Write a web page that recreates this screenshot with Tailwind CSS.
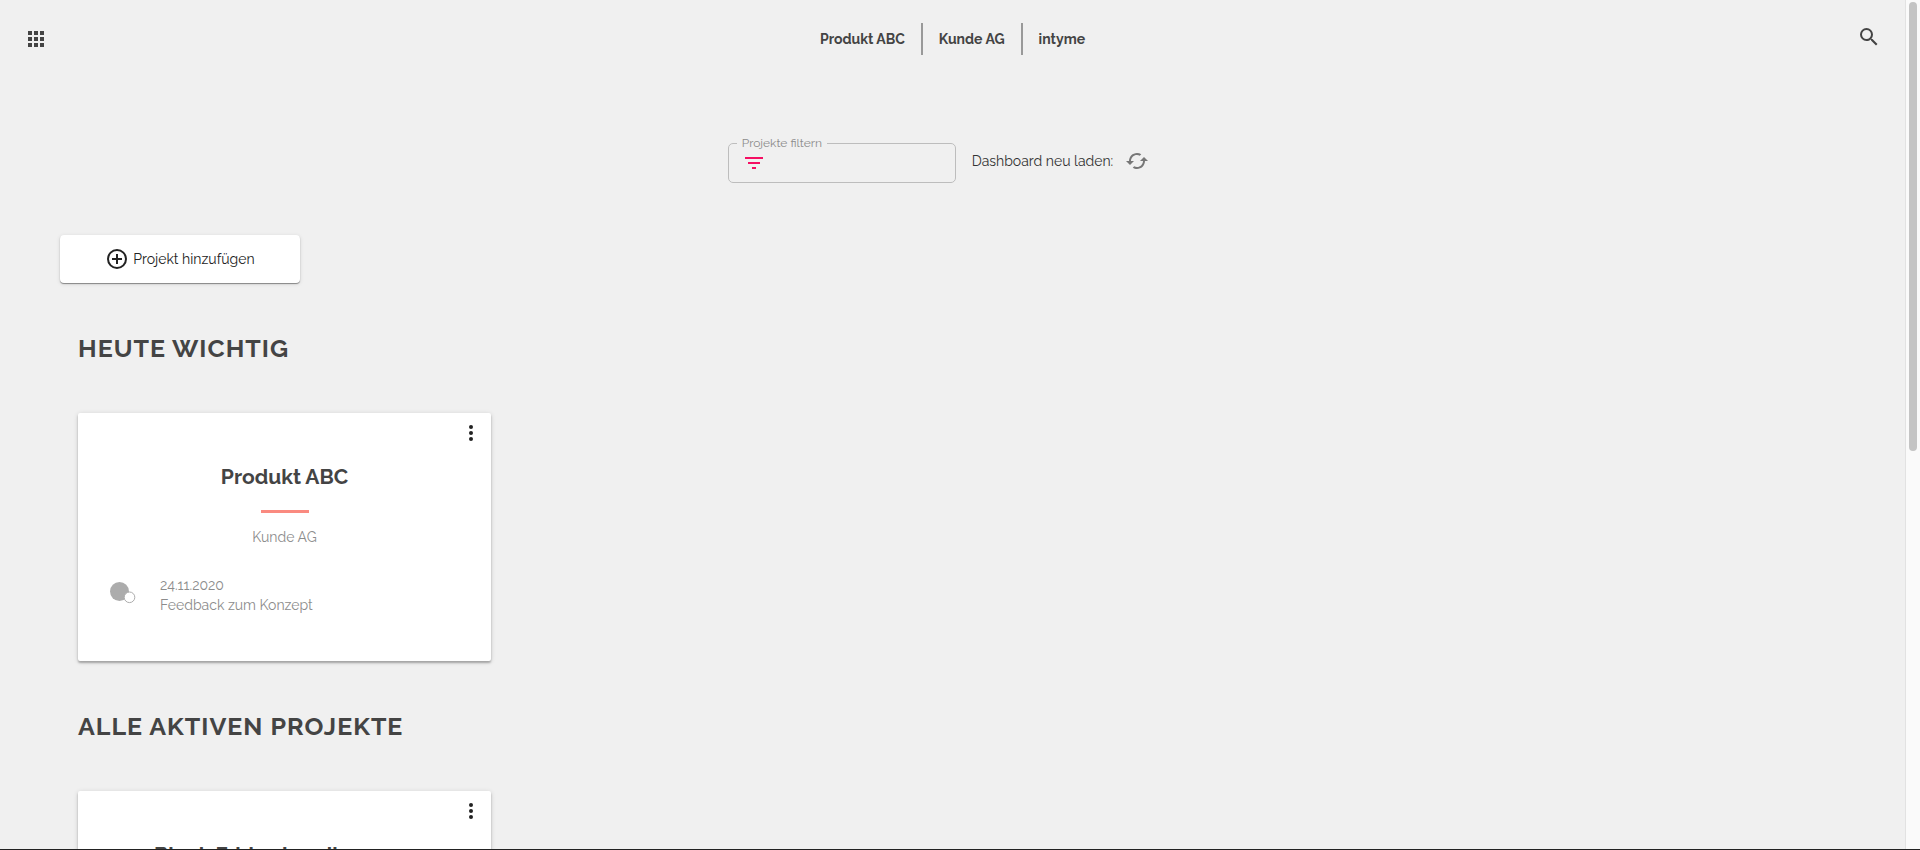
<!DOCTYPE html>
<html lang="de">
<head>
<meta charset="utf-8">
<meta name="viewport" content="width=device-width, initial-scale=1">
<title>Dashboard</title>
<script src="https://cdn.jsdelivr.net/npm/@tailwindcss/browser@4"></script>
</head>
<body class="flex h-screen overflow-hidden border-b border-[#222] bg-[#f0f0f0] font-[Raleway,Lato,sans-serif] text-sm leading-5 text-[#444]">
<div class="min-w-0 flex-1 overflow-hidden">
  <header class="grid h-[78px] grid-cols-[1fr_auto_1fr] items-center px-6">
    <button aria-label="Menü" class="w-6"><svg class="size-6" viewBox="0 0 24 24" fill="#444"><path d="M4 8h4V4H4zm6 12h4v-4h-4zm-6 0h4v-4H4zm0-6h4v-4H4zm6 0h4v-4h-4zm6-10v4h4V4zm-6 4h4V4h-4zm6 6h4v-4h-4zm0 6h4v-4h-4z"/></svg></button>
    <nav class="flex h-8 items-center font-bold">
      <a href="#" class="px-4">Produkt ABC</a>
      <a href="#" class="flex h-8 items-center border-x-2 border-[#999] px-4">Kunde AG</a>
      <a href="#" class="px-4">intyme</a>
    </nav>
    <button aria-label="Suchen" class="w-6 justify-self-end pb-1"><svg class="size-6" viewBox="0 0 24 24" fill="#444"><path d="M15.5 14h-.79l-.28-.27A6.47 6.47 0 0 0 16 9.5 6.5 6.5 0 1 0 9.5 16c1.61 0 3.09-.59 4.23-1.57l.27.28v.79l5 4.99L20.49 19zm-6 0a4.5 4.5 0 1 1 0-9 4.5 4.5 0 0 1 0 9z"/></svg></button>
  </header>
  <main class="px-[60px] pt-14">
    <div class="flex items-center justify-center gap-4 pr-7">
      <fieldset class="h-[49px] w-[228px] rounded-[5px] border border-[#bdbdbd] px-2">
        <legend class="px-[5px] text-xs leading-[18px] text-[#8c8c8c]"><label for="filter">Projekte filtern</label></legend>
        <div class="-mt-px flex items-center gap-2 pl-[5px]">
          <svg class="size-6 shrink-0" viewBox="0 0 24 24" fill="#f50f63"><path d="M10 18h4v-2h-4zM3 6v2h18V6zm3 7h12v-2H6z"/></svg>
          <input id="filter" type="text" class="min-w-0 flex-1 bg-transparent outline-none">
        </div>
      </fieldset>
      <div class="flex items-center gap-3 pt-1">
        <span id="reload" class="text-[#333]">Dashboard neu laden:</span>
        <button aria-labelledby="reload"><svg class="size-6" viewBox="0 0 24 24" fill="#777"><path d="m19 8-4 4h3c0 3.310-2.690 6-6 6-1.010 0-1.970-.25-2.800-.7l-1.460 1.460C8.970 19.540 10.430 20 12 20c4.420 0 8-3.580 8-8h3zM6 12c0-3.310 2.690-6 6-6 1.010 0 1.970.25 2.800.7l1.460-1.460C15.030 4.460 13.570 4 12 4c-4.420 0-8 3.580-8 8H1l4 4 4-4z"/></svg></button>
      </div>
    </div>
    <button class="mt-[52px] flex h-12 w-60 items-center justify-center gap-1 rounded bg-white text-[#222] shadow-[0_1px_1px_rgba(0,0,0,0.4),0_1px_4px_rgba(0,0,0,0.12)]">
      <svg class="size-6" viewBox="0 0 24 24" fill="#222"><path d="M13 7h-2v4H7v2h4v4h2v-4h4v-2h-4zm-1-5a10 10 0 1 0 0 20 10 10 0 0 0 0-20zm0 18a8 8 0 1 1 0-16 8 8 0 0 1 0 16z"/></svg>
      Projekt hinzufügen
    </button>
    <div class="px-[18px]">
      <section class="pt-12">
        <h2 class="text-[25px] leading-[34px] font-bold tracking-[1px]">HEUTE WICHTIG</h2>
        <article class="mt-12 flex h-[248px] w-[413px] flex-col rounded-[2px] bg-white shadow-[0_2px_2px_rgba(0,0,0,0.25),0_1px_5px_rgba(0,0,0,0.15)]">
          <button aria-label="Optionen" class="mt-2 mr-2 self-end"><svg class="size-6" viewBox="0 0 24 24" fill="#222"><circle cx="12" cy="6" r="2"/><circle cx="12" cy="12" r="2"/><circle cx="12" cy="18" r="2"/></svg></button>
          <h3 class="mt-4 text-center text-[21px] leading-8 font-bold">Produkt ABC</h3>
          <div class="mt-[17px] h-[3px] w-12 self-center bg-[#fa8a80]"></div>
          <p class="mt-[14px] text-center text-[#8c8c8c]">Kunde AG</p>
          <div class="mt-7 flex gap-6 pl-8 text-[#8c8c8c]">
            <svg class="mt-[7px] h-[22px] w-[26px]" viewBox="0 0 26 22"><circle cx="9.500" cy="9.500" r="9.500" fill="#acacac"/><circle cx="19.500" cy="15.300" r="5.300" fill="#fff" stroke="#acacac"/></svg>
            <p>24.11.2020<br>Feedback zum Konzept</p>
          </div>
        </article>
      </section>
      <section class="pt-12">
        <h2 class="text-[25px] leading-[34px] font-bold tracking-[1px]">ALLE AKTIVEN PROJEKTE</h2>
        <article class="mt-12 flex h-[248px] w-[413px] flex-col rounded-[2px] bg-white shadow-[0_2px_2px_rgba(0,0,0,0.25),0_1px_5px_rgba(0,0,0,0.15)]">
          <button aria-label="Optionen" class="mt-2 mr-2 self-end"><svg class="size-6" viewBox="0 0 24 24" fill="#222"><circle cx="12" cy="6" r="2"/><circle cx="12" cy="12" r="2"/><circle cx="12" cy="18" r="2"/></svg></button>
          <h3 class="mt-4 text-center text-[21px] leading-8 font-bold">Black Friday Landingpage</h3>
        </article>
      </section>
    </div>
  </main>
</div>
<div class="w-[15px] border-l border-[#e2e2e2] bg-[#fafafa] pt-0.5 pl-[3px]" aria-hidden="true"><div class="h-[449px] w-2 rounded-full bg-[#c4c4c4]"></div></div>
</body>
</html>
